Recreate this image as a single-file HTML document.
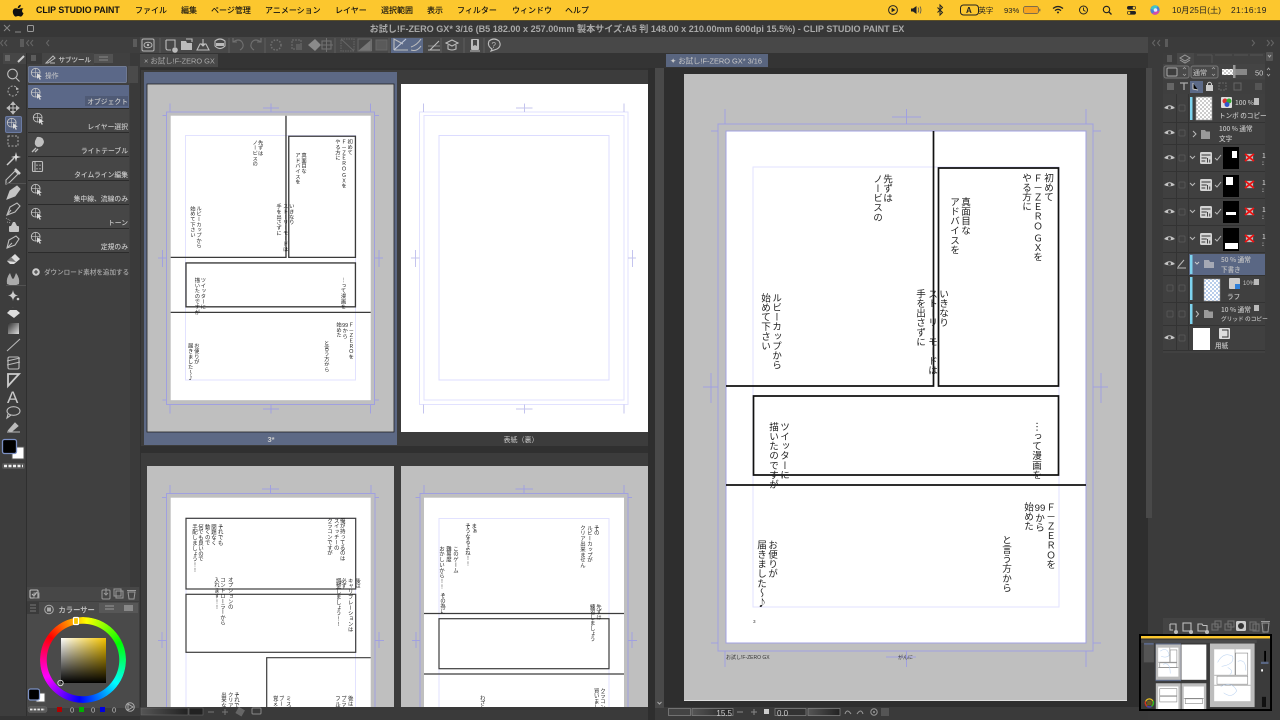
<!DOCTYPE html>
<html><head><meta charset="utf-8"><style>
html,body{margin:0;padding:0;background:#3a3a3a;overflow:hidden}
svg{display:block;position:absolute;left:0;top:0}
text{font-family:"Liberation Sans","Noto Sans CJK JP",sans-serif}
.m{font-size:8px;fill:#111;font-family:"Noto Sans CJK JP","Liberation Sans",sans-serif;font-weight:500}
.l{font-size:6.8px;fill:#c8c8c8;font-family:"Noto Sans CJK JP",sans-serif;font-weight:500}
.ly{font-size:6.6px;fill:#c4c4c4;font-family:"Noto Sans CJK JP",sans-serif;font-weight:500}
.v{writing-mode:vertical-rl;text-orientation:upright;font-family:"Noto Sans CJK JP",sans-serif;font-size:9.6px;fill:#222}
.s{font-size:5.4px}
.ic{fill:none;stroke:#bdbdbd;stroke-width:1.1}
.id{fill:none;stroke:#707070;stroke-width:1.1}
.mk{fill:none;stroke:#a0a0e0;stroke-width:1;vector-effect:non-scaling-stroke;shape-rendering:crispEdges}
.fr{fill:none;stroke:#e2e2ff;stroke-width:1;vector-effect:non-scaling-stroke;shape-rendering:crispEdges}
</style></head><body>
<svg width="1280" height="720" viewBox="0 0 1280 720" xmlns="http://www.w3.org/2000/svg">
<defs>
<linearGradient id="sq1" x1="0" x2="1" y1="0" y2="0"><stop offset="0" stop-color="#fff"/><stop offset="1" stop-color="#f4c400"/></linearGradient>
<linearGradient id="sq2" x1="0" x2="0" y1="0" y2="1"><stop offset="0" stop-color="#000" stop-opacity="0"/><stop offset="1" stop-color="#000"/></linearGradient>
<linearGradient id="gr" x1="0" x2="1" y1="0" y2="1"><stop offset="0" stop-color="#333"/><stop offset="1" stop-color="#ddd"/></linearGradient>
<linearGradient id="sl" x1="0" x2="1" y1="0" y2="0"><stop offset="0" stop-color="#555"/><stop offset="1" stop-color="#222"/></linearGradient>
<pattern id="ck" width="4" height="4" patternUnits="userSpaceOnUse"><rect width="4" height="4" fill="#fff"/><rect width="2" height="2" fill="#ccc"/><rect x="2" y="2" width="2" height="2" fill="#ccc"/></pattern>
<pattern id="ckb" width="4" height="4" patternUnits="userSpaceOnUse"><rect width="4" height="4" fill="#fff"/><rect width="2" height="2" fill="#b8cdea"/><rect x="2" y="2" width="2" height="2" fill="#b8cdea"/></pattern>
<symbol id="eye" viewBox="0 0 12 8" overflow="visible"><path d="M0 4Q6-2 12 4Q6 7 0 4Z" fill="#c4c4c4"/><circle cx="6" cy="3.6" r="1.6" fill="#444"/></symbol>
<symbol id="obj" viewBox="0 0 16 16" overflow="visible"><circle cx="6.5" cy="6.5" r="5" fill="none" stroke="#c4c4c4" stroke-width="1"/><path d="M1.5 6.5H11.5M6.5 1.5V11.5" stroke="#c4c4c4" stroke-width=".7"/><path d="M8 7L13.5 11L11 11.4L12.5 14L11 14.6L9.8 12L8 13.5Z" fill="#ddd"/></symbol>
<symbol id="mks" viewBox="0 0 10 10" overflow="visible"><rect x="1" y="1" width="8" height="8" fill="#bbb"/><path d="M0 1L10 9M10 1L0 9" stroke="#ee1111" stroke-width="2"/></symbol>
<symbol id="lt" viewBox="0 0 16 16" overflow="visible"><rect x="0" y="0" width="16" height="16" rx="2" fill="#d4d4d4"/><path d="M2 4H14M2 8H9M2 12H7M10 8V14M13 10V14" stroke="#333" stroke-width="1.2"/></symbol>
</defs>

<!-- base -->
<rect width="1280" height="720" fill="#3a3a3a"/>
<rect width="1280" height="20" fill="#fcc72e"/>
<rect y="20" width="1280" height="1" fill="#5a4d24"/>
<rect y="21" width="1280" height="16" fill="#373737"/>
<rect y="37" width="1280" height="16" fill="#3e3e3e"/>
<rect y="53" width="1280" height="15" fill="#343434"/>

<!-- menu bar -->
<path d="M21.6 8.2c-1.4 0-1.9.8-3 .8s-1.600-.8-2.900-.8c-1.600 0-2.900 1.400-2.900 3.600 0 2.300 1.600 4.800 2.900 4.800.9 0 1.400-.6 2.500-.6s1.500.6 2.500.6c1.300 0 2.400-2.200 2.800-3.400-1.800-.8-2-3.600-.1-4.400-.6-.5-1.100-.6-1.800-.6zM19.900 7.300c.7-.8 1-1.700.9-2.600-.9.100-1.800.6-2.300 1.300-.5.600-.8 1.500-.7 2.200.8.100 1.600-.3 2.100-.9z" fill="#111"/>
<text x="36" y="12.800" font-size="8.800" font-weight="700" fill="#111" style="font-family:'Liberation Sans',sans-serif">CLIP STUDIO PAINT</text>
<text class="m" x="135" y="12.800">ファイル</text><text class="m" x="181" y="12.800">編集</text><text class="m" x="211" y="12.800">ページ管理</text><text class="m" x="265" y="12.800">アニメーション</text><text class="m" x="335" y="12.800">レイヤー</text><text class="m" x="381" y="12.800">選択範囲</text><text class="m" x="427" y="12.800">表示</text><text class="m" x="457" y="12.800">フィルター</text><text class="m" x="512" y="12.800">ウィンドウ</text><text class="m" x="565" y="12.800">ヘルプ</text>
<!-- status icons -->
<circle cx="893" cy="10" r="4.400" fill="none" stroke="#222" stroke-width="1"/><path d="M891.600 7.800L895.500 10L891.600 12.200Z" fill="#222"/>
<path d="M911 8.500H913L916.500 6V14L913 11.500H911Z" fill="#222"/><path d="M918 7.500Q919.500 10 918 12.500M920 6.500Q922 10 920 13.500" fill="none" stroke="#555" stroke-width=".8"/>
<path d="M937.500 7.500L942.500 12.500L940 15V5L942.500 7.500L937.500 12.500" fill="none" stroke="#222" stroke-width="1"/>
<rect x="960.500" y="5" width="18" height="10" rx="3" fill="none" stroke="#222" stroke-width="1"/><text x="966" y="13" font-size="8" font-weight="700" fill="#222">A</text>
<text x="978.500" y="13" font-size="7.400" fill="#222" style="font-family:'Noto Sans CJK JP',sans-serif">英字</text>
<text x="1004" y="13" font-size="7.600" fill="#222">93%</text>
<rect x="1023.500" y="6.500" width="15" height="7" rx="2" fill="#f7a51f" stroke="#555" stroke-width=".7"/><rect x="1039.300" y="8.800" width="1" height="2.500" fill="#555"/>
<path d="M1053 8.500Q1058 4.500 1063 8.500M1055 10.600Q1058 8 1061 10.600" fill="none" stroke="#222" stroke-width="1.300"/><path d="M1056.800 12.300L1058 11.300L1059.200 12.300L1058 13.800Z" fill="#222"/>
<circle cx="1083.500" cy="10" r="4" fill="none" stroke="#222" stroke-width="1"/><path d="M1083.500 7.500V10.200L1085.500 11.400" fill="none" stroke="#222" stroke-width=".9"/>
<circle cx="1106.500" cy="9.500" r="3.200" fill="none" stroke="#222" stroke-width="1.100"/><path d="M1109 12L1111.500 14.500" stroke="#222" stroke-width="1.300"/>
<rect x="1127" y="6" width="9" height="3.600" rx="1.800" fill="#222"/><rect x="1127" y="11" width="9" height="3.600" rx="1.800" fill="#222"/><circle cx="1134" cy="7.800" r="1.300" fill="#fcc72e"/><circle cx="1129" cy="12.800" r="1.300" fill="#fcc72e"/>
<circle cx="1155" cy="10" r="4.700" fill="#4b7fd6"/><path d="M1150.500 9Q1153 4 1158 6L1155 10Z" fill="#3fc7c7"/><path d="M1152 13.600Q1155 11 1159.600 10.600Q1158 15 1154 14.800Z" fill="#d64ba8"/><circle cx="1155.500" cy="10" r="1.800" fill="#e8e8ff"/>
<text x="1172" y="13" font-size="8.200" fill="#222" style="font-family:'Liberation Sans','Noto Sans CJK JP',sans-serif" letter-spacing=".1">10月25日(土)</text>
<text x="1231" y="13" font-size="8.400" fill="#222" letter-spacing=".4">21:16:19</text>

<!-- title -->
<text x="637" y="32" text-anchor="middle" font-size="9.080" font-weight="700" fill="#a9a9a9" style="font-family:'Liberation Sans','Noto Sans CJK JP',sans-serif">お試し!F-ZERO GX* 3/16 (B5 182.00 x 257.00mm 製本サイズ:A5 判 148.00 x 210.00mm 600dpi 15.5%) - CLIP STUDIO PAINT EX</text>
<path d="M4 25L10 31M10 25L4 31" stroke="#888" stroke-width="1"/><path d="M15 32H21" stroke="#888" stroke-width="1"/><rect x="27.500" y="25.500" width="6" height="6" rx="1" fill="none" stroke="#999" stroke-width="1"/>

<!-- left collapse row -->
<path d="M3 40L0.500 43L3 46M7 40L4.500 43L7 46M29 40L26.500 43L29 46M33 40L30.500 43L33 46M49 40L46.500 43L49 46" fill="none" stroke="#666" stroke-width="1"/>
<rect x="20" y="39" width="4" height="8" fill="#5b5b5b"/><rect x="133" y="39" width="4" height="8" fill="#5b5b5b"/>

<!-- command bar -->
<rect x="140" y="37" width="1010" height="16" fill="#484848"/>
<rect x="391" y="38" width="32" height="15" fill="#5c6a88"/>
<rect x="142" y="39" width="12" height="12" rx="1.500" fill="none" stroke="#b8b8b8"/><ellipse cx="148" cy="45" rx="4" ry="2.800" fill="none" stroke="#b8b8b8"/><circle cx="148" cy="45" r="1.200" fill="#b8b8b8"/>
<path d="M160 38V53M229 38V53M265 38V53M335 38V53M389 38V53M441 38V53M464 38V53M484 38V53" stroke="#5e5e5e"/>
<path d="M166 40H175V47M166 40V48Q166 50 168 50H171" class="ic"/><circle cx="175" cy="50" r="2.800" fill="#bbb"/>
<path d="M181 41H186L187 43H192V50H181Z" fill="#bbb"/><path d="M186 39L192 39L192 42" class="ic"/>
<path d="M197 50L200 44H206L209 50Z" class="ic"/><path d="M203 39V46M200.500 43.500L203 46L205.500 43.500" class="ic"/>
<path d="M215 41Q220 37 225 41V46Q220 51 215 46Z" class="ic"/><rect x="216" y="43" width="8" height="3" fill="#bbb"/>
<path d="M237 42H233V38M233 42Q239 38 242 42Q245 47 240 50" class="id"/>
<path d="M257 42H261V38M261 42Q255 38 252 42Q249 47 254 50" class="id"/>
<circle cx="276" cy="45" r="5" fill="none" stroke="#707070" stroke-width="1.500" stroke-dasharray="1.500 1.500"/>
<rect x="292" y="40" width="9" height="9" fill="none" stroke="#707070" stroke-dasharray="2 1"/><rect x="296" y="44" width="6" height="6" fill="#5d5d5d"/>
<path d="M308 45L315 39L321 45L315 51Z" fill="#8a8a8a"/>
<rect x="322" y="41" width="9" height="8" class="id"/><path d="M326.500 38V52M320 45H333" stroke="#707070"/>
<rect x="341" y="39" width="13" height="12" fill="none" stroke="#666" stroke-dasharray="1.500 1"/><path d="M341 39L354 51" stroke="#666"/>
<path d="M358 51L372 39V51Z" fill="#777"/><rect x="358" y="39" width="13" height="12" fill="none" stroke="#666"/>
<rect x="376" y="40" width="11" height="10" fill="#5a5a5a" stroke="#666"/>
<path d="M394 50H408M394 50V39L403 44" class="ic"/><path d="M394 50L406 39" stroke="#c0c8da" stroke-width="1.100"/>
<path d="M411 50Q417 52 421 46M411 47Q417 45 421 39" class="ic"/>
<path d="M428 50H440M430 50L439 41" class="ic"/><path d="M428 46H440" class="ic" opacity=".5"/>
<path d="M446 43L452 40L458 43L452 46Z" class="ic"/><path d="M448 45V49Q452 51 456 49V45" class="ic"/>
<rect x="471" y="39" width="8" height="11" rx="1" fill="#bbb"/><path d="M473 40V46L475 45L477 46V40" fill="#484848"/><path d="M470 51H480" stroke="#bbb"/>
<path d="M489 41Q494 37 499 41Q502 46 497 49L491 51L492 49Q487 46 489 41Z" class="ic"/><text x="491.500" y="48" font-size="8" fill="#bbb">?</text>

<!-- tabs -->
<rect x="140" y="54" width="78" height="13" fill="#484848"/>
<text x="144" y="63.500" font-size="7.400" fill="#aaa" style="font-family:'Liberation Sans','Noto Sans CJK JP',sans-serif">×  お試し!F-ZERO GX</text>
<rect x="666" y="54" width="102" height="13" fill="#59657f"/>
<text x="670" y="63.500" font-size="7.400" fill="#c8c8c8" style="font-family:'Liberation Sans','Noto Sans CJK JP',sans-serif">✦ お試し!F-ZERO GX* 3/16</text>

<!-- LEFT canvas area -->
<rect x="140" y="68" width="510" height="652" fill="#303030"/>
<rect x="141" y="70" width="510" height="376" fill="#3c3c3c"/>
<rect x="141" y="453" width="510" height="267" fill="#3c3c3c"/>
<rect x="144" y="72" width="253" height="373" fill="#5d6985"/>
<rect x="147" y="84" width="247" height="348" fill="#bfbfbf" stroke="#222" stroke-width=".8"/>
<text x="271" y="442" text-anchor="middle" font-size="7.500" font-weight="700" fill="#ccc">3*</text>
<rect x="401" y="84" width="247" height="348" fill="#fff"/>
<text x="521" y="442" text-anchor="middle" font-size="7" fill="#ccc" style="font-family:'Noto Sans CJK JP',sans-serif">表紙（裏）</text>
<rect x="147" y="466" width="247" height="254" fill="#bfbfbf"/>
<rect x="401" y="466" width="247" height="254" fill="#bfbfbf"/>

<!-- P1 -->
<g transform="translate(170.700,115.700) scale(.5556)">
<rect width="360" height="512" fill="#fff"/>
<path class="fr" d="M27 36H333V476H27Z"/>
<path class="mk" d="M-8-7H367V520H-8ZM-1-22V-7M360-22V-7M-15 0H-8M367 0H375M-15 512H-8M367 512H375M-1 520V536M360 520V536M166-14H195M180.500-22V-7M166 528H195M180.500 520V536M-23 256H-8M-15 242V272M367 256H382M375 242V272"/>
<g fill="none" stroke="#3a3a3a" stroke-width="2.400">
<path d="M207.500 0V255H0"/><path d="M212.500 37H332.500V255H212.500Z"/><path d="M27.500 265H332.500V344H27.500Z"/><path d="M0 354H360"/>
</g>
<text class="v" x="323" y="42">初めて</text><text class="v" x="312" y="42">Ｆ－ＺＥＲＯ</text><text class="v" x="312" y="102">ＧＸを</text><text class="v" x="301" y="42">やる方に</text>
<text class="v" x="240" y="66">真面目な</text><text class="v" x="229" y="66">アドバイスを</text>
<text class="v" x="162" y="43">先ずは</text><text class="v" x="152" y="43">ノービスの</text>
<text class="v" x="218" y="158">いきなり</text><text class="v" x="207" y="158">ストーリーモードは</text><text class="v" x="195" y="158">手を出さずに</text>
<text class="v" x="51" y="162">ルビーカップから</text><text class="v" x="40" y="162">始めて下さい</text>
<text class="v" x="59" y="291">ツイッターに</text><text class="v" x="48" y="291">描いたのですが</text>
<text class="v" x="311" y="291">…って漫画を</text>
<text class="v" x="325" y="371">Ｆ－ＺＥＲＯを</text><text x="314" y="380" text-anchor="middle" font-size="9.600" fill="#222">99</text><text class="v" x="314" y="382">から</text><text class="v" x="303" y="371">始めた</text>
<text class="v" x="281" y="404">と言う方から</text>
<text class="v" x="47" y="409">お便りが</text><text class="v" x="36" y="409">届きました～♪</text>
</g>

<!-- P2 -->
<g transform="translate(424,115.700) scale(.5556)">
<path class="fr" d="M-8-7H367V520H-8ZM0 0H360V512H0Z"/>
<path class="fr" d="M27 36H333V476H27Z" style="stroke:#dcdcff"/>
<path class="mk" d="M-1-22V-7M360-22V-7M-1 520V536M360 520V536M166-14H195M180.500-22V-7M166 528H195M180.500 520V536M-23 256H-8M-15 242V272M367 256H382M375 242V272" style="stroke:#c4c4ee"/>
</g>

<!-- P3 -->
<g>
<rect x="170.700" y="497.700" width="200" height="222" fill="#fff"/>
<path class="mk" d="M166.700 720V493.700H375V720M170 485V493.700M371 485V493.700M262 489H279M270.700 485V493.700M162 497.700H166.700M375 497.700H379M158 640.500H166.700M162 632V648M375 640.500H384M379 632V648"/>
<path class="fr" d="M186 708V518.300H355.700V708"/>
<g fill="none" stroke="#3c3c3c" stroke-width="1.200"><rect x="186" y="518.300" width="169.700" height="70.700"/><rect x="186" y="594.300" width="169.700" height="58"/><path d="M266.700 708V657.700H370.700"/></g>
<text class="v s" x="342.700" y="518">俺が持ってるのは</text><text class="v s" x="336.700" y="518">スイッチーの</text><text class="v s" x="330" y="518">クラコンですが</text>
<text class="v s" x="220.700" y="524">それでも</text><text class="v s" x="214" y="524">問題なく</text><text class="v s" x="207.700" y="524">動くので</text><text class="v s" x="201" y="524">何でも良いので</text><text class="v s" x="195" y="524">手配しましょう!!</text>
<text class="v s" x="358" y="578">後は</text><text class="v s" x="350.700" y="578">キャリブレーションは</text><text class="v s" x="344" y="578">必ず</text><text class="v s" x="338.700" y="578">調整しましょう!!</text>
<text class="v s" x="230.700" y="577">オプションの</text><text class="v s" x="223" y="577">コントローラーから</text><text class="v s" x="217" y="577">入れます!!</text>
<text class="v s" x="237" y="692">それで</text><text class="v s" x="230.700" y="692">クリア</text><text class="v s" x="224" y="692">出来な</text>
<text class="v s" x="288.700" y="695.700">ミスず</text><text class="v s" x="281.700" y="695.700">ブース</text><text class="v s" x="275.700" y="695.700">覚えま</text>
<text class="v s" x="350.700" y="695.700">後は</text><text class="v s" x="344" y="695.700">プラク</text><text class="v s" x="338" y="695.700">フル活</text>
</g>

<!-- P4 -->
<g>
<rect x="424" y="497.700" width="200" height="222" fill="#fff"/>
<path class="mk" d="M420 720V493.700H628V720M424 485V493.700M624 485V493.700M515.500 489H533M524 485V493.700M415.500 497.700H420M628 497.700H632M412 640.500H420M416 632V648M628 640.500H637M632 632V648"/>
<path class="fr" d="M439 708V518.300H609V708"/>
<g fill="none" stroke="#3c3c3c" stroke-width="1.200"><path d="M424 613.500H624M424 674H624"/><rect x="439" y="618.700" width="170" height="50"/></g>
<text class="v s" x="596.700" y="525">その</text><text class="v s" x="590" y="525">ルビーカップが</text><text class="v s" x="583" y="525">クリア出来ません</text>
<text class="v s" x="474.300" y="523">まぁ</text><text class="v s" x="468" y="523">そうなるよね!!</text>
<text class="v s" x="456" y="546">このゲーム</text><text class="v s" x="449" y="546">難易度</text><text class="v s" x="442" y="546">おかしいから!!</text>
<text class="v s" x="443" y="592.700">その為に</text>
<text class="v s" x="599" y="604">先ずは</text><text class="v s" x="592.700" y="604">練習しましょう</text>
<text class="v s" x="603" y="688">クラコン</text><text class="v s" x="596.700" y="688">買いまし</text><text class="v s" x="482.700" y="695">わざわ</text>
</g>

<!-- left canvas bottom bar -->
<rect x="140" y="707" width="512" height="13" fill="#3a3a3a"/>
<rect x="141" y="708" width="47" height="7" fill="url(#sl)" stroke="#666" stroke-width=".6"/><rect x="189" y="708" width="14" height="7" fill="#222" stroke="#666" stroke-width=".6"/>
<path d="M208 712H214M222 712H228M225 709V715" stroke="#777"/><rect x="237" y="708" width="7" height="7" fill="#666" transform="rotate(30 240 711)"/><rect x="252" y="708" width="9" height="6" rx="1" fill="none" stroke="#888"/>

<!-- scroll gutter -->
<rect x="648" y="68" width="7" height="652" fill="#2e2e2e"/>
<rect x="655" y="68" width="9" height="640" fill="#494949"/>
<path d="M657.500 702L659.500 704L661.500 702" fill="none" stroke="#aaa"/>
<rect x="664" y="68" width="484" height="640" fill="#2e2e2e"/>

<!-- MAIN canvas -->
<rect x="684" y="74" width="443" height="627" fill="#bfbfbf"/><rect x="684" y="700" width="443" height="1" fill="#e0e0e0"/>
<rect x="726" y="131" width="360" height="512" fill="#fff"/>
<g transform="translate(726,131)">
<path class="fr" d="M27 36H333V476H27Z"/>
<path class="mk" d="M-8-7H367V520H-8ZM-1-22V-7M360-22V-7M-15 0H-8M367 0H375M-15 512H-8M367 512H375M-1 520V536M360 520V536M166-14H195M180.500-22V-7M160 526H190M180.500 520V536M-23 256H-8M-15 242V272M367 256H382M375 242V272M0 0H360V512H0Z"/>
<g fill="none" stroke="#111" stroke-width="1.700">
<path d="M207.500 0V255H0"/><path d="M212.500 37H332.500V255H212.500Z"/><path d="M27.500 265H332.500V344H27.500Z"/><path d="M0 354H360"/>
</g>
<text class="v" x="323" y="42">初めて</text><text class="v" x="312" y="42">Ｆ－ＺＥＲＯ</text><text class="v" x="312" y="102">ＧＸを</text><text class="v" x="301" y="42">やる方に</text>
<text class="v" x="240" y="66">真面目な</text><text class="v" x="229" y="66">アドバイスを</text>
<text class="v" x="162" y="43">先ずは</text><text class="v" x="152" y="43">ノービスの</text>
<text class="v" x="218" y="158">いきなり</text><text class="v" x="207" y="158">ストーリーモードは</text><text class="v" x="195" y="158">手を出さずに</text>
<text class="v" x="51" y="162">ルビーカップから</text><text class="v" x="40" y="162">始めて下さい</text>
<text class="v" x="59" y="291">ツイッターに</text><text class="v" x="48" y="291">描いたのですが</text>
<text class="v" x="311" y="291">…って漫画を</text>
<text class="v" x="325" y="371">Ｆ－ＺＥＲＯを</text><text x="314" y="380" text-anchor="middle" font-size="9.600" fill="#222">99</text><text class="v" x="314" y="382">から</text><text class="v" x="303" y="371">始めた</text>
<text class="v" x="281" y="404">と言う方から</text>
<text class="v" x="47" y="409">お便りが</text><text class="v" x="36" y="409">届きました～♪</text>
<text x="27" y="492" font-size="4.600" fill="#333">3</text>
<text x="0" y="528" font-size="5" fill="#333" style="font-family:'Liberation Sans','Noto Sans CJK JP',sans-serif">お試し!F-ZERO GX</text>
<text x="172" y="528" font-size="5" fill="#333" style="font-family:'Noto Sans CJK JP',sans-serif">がんに</text>
</g>

<!-- main canvas status -->
<rect x="664" y="707" width="486" height="13" fill="#3a3a3a"/>
<rect x="668.500" y="708.500" width="22" height="7" fill="#444" stroke="#888" stroke-width=".7"/><rect x="692" y="708.500" width="41" height="7" fill="url(#sl)" stroke="#888" stroke-width=".7"/>
<text x="732" y="716" text-anchor="end" font-size="8" fill="#ccc">15.5</text>
<path d="M737 712H743M751 712H757M754 709V715" stroke="#888"/><rect x="764" y="709" width="5" height="5" fill="#ccc"/>
<rect x="775" y="708.500" width="31" height="7" fill="#333" stroke="#888" stroke-width=".7"/><text x="777" y="716" font-size="8" fill="#ccc">0.0</text>
<rect x="808" y="708.500" width="32" height="7" fill="url(#sl)" stroke="#888" stroke-width=".7"/>
<path d="M845 714Q847 708 851 714M857 714Q861 708 863 714" fill="none" stroke="#999"/><circle cx="874" cy="712" r="3.200" fill="none" stroke="#999"/><circle cx="874" cy="712" r="1" fill="#999"/><rect x="881" y="708" width="8" height="8" fill="#555"/>

<!-- left tool column -->
<rect x="0" y="53" width="140" height="667" fill="#3d3d3d"/>
<rect x="26" y="53" width="1" height="667" fill="#2f2f2f"/>
<rect x="3" y="53" width="23" height="11" fill="#464646"/><rect x="5" y="55" width="5" height="6" fill="#666"/><path d="M18 62L24 56" stroke="#ccc" stroke-width="2"/>
<circle cx="12.500" cy="74" r="4.800" class="ic"/><path d="M16 78L19.500 81.500" class="ic" stroke-width="1.500"/>
<circle cx="13" cy="91" r="5" fill="none" stroke="#aaa" stroke-dasharray="2 1.500"/><path d="M16 87L19 89L16 90" fill="#bbb"/>
<path d="M13 102V114M7 108H19M13 102L11 104.500H15ZM13 114L11 111.500H15ZM7 108L9.500 106V110ZM19 108L16.500 106V110Z" fill="#bbb" stroke="#bbb" stroke-width="1"/>
<rect x="5.500" y="116.500" width="16" height="16" rx="1.500" fill="#55617f" stroke="#6b7ba3"/><use href="#obj" x="6" y="117" width="14" height="14"/>
<rect x="8" y="136" width="10" height="10" fill="none" stroke="#aaa" stroke-dasharray="2 1.500"/>
<path d="M7 165L14 158" stroke="#ccc" stroke-width="1.500"/><path d="M16 152L17 156L21 157L17 158L16 162L15 158L11 157L15 156Z" fill="#ddd"/>
<path d="M6 180L15 171L18 174L9 183L6 184Z" class="ic"/><path d="M15 169L20 174" stroke="#ccc" stroke-width="2.500"/>
<rect x="6" y="183" width="20" height=".8" fill="#585858"/>
<path d="M7 199L10 191L17 186L20 189L15 196ZM7 199L12 194" fill="#c4c4c4" stroke="#c4c4c4"/>
<path d="M7 215L10 207L17 203L20 206L15 212Z" class="ic"/><path d="M7 215L11 210" class="ic"/>
<rect x="9" y="226" width="10" height="6" rx="1" fill="#c4c4c4"/><path d="M11 226L13 222H15L17 226" fill="#c4c4c4"/><path d="M6 218L11 221M7 222L11 223" stroke="#999" stroke-dasharray="1 1"/>
<path d="M7 248L9 240L16 236L19 239L15 245Z" class="ic"/><path d="M7 248L12 243" class="ic"/>
<path d="M7 261L15 254L20 259L14 264H10Z" fill="#ddd"/><path d="M7 261L11 257L16 262" fill="#777"/>
<path d="M7 284Q6 278 10 273Q12 279 13 279Q14 279 16 273Q20 278 19 284Q13 287 7 284Z" fill="#aaa"/>
<rect x="6" y="285" width="20" height=".8" fill="#585858"/>
<path d="M13 290Q13.500 295 18 295.500Q13.500 296 13 301Q12.500 296 8 295.500Q12.500 295 13 290Z" fill="#ccc"/><circle cx="18" cy="299" r="1.300" fill="#ccc"/>
<path d="M13 307L20 313L14 318L7 313Z" fill="#ddd"/><path d="M9 310L13 307L18 310Z" fill="#3d3d3d"/>
<rect x="8" y="323" width="11" height="11" fill="url(#gr)"/>
<path d="M7 351L20 339" stroke="#bbb"/>
<rect x="8" y="357" width="11" height="12" rx="1.500" class="ic"/><path d="M7 361L20 358M7 365L20 362" stroke="#bbb"/>
<path d="M8 374H19L8 386Z" fill="none" stroke="#ccc" stroke-width="1.800"/>
<text x="7" y="403" font-size="17" fill="#c8c8c8">A</text>
<ellipse cx="13.500" cy="411" rx="6.500" ry="4.300" class="ic"/><path d="M8 414L7 418L11 415" class="ic"/>
<path d="M7 432H20M8 431L15 423L18 426L11 432" fill="#bbb" stroke="#bbb"/>
<rect x="12" y="447" width="12" height="12" fill="#fff" stroke="#555"/>
<rect x="2.500" y="439.500" width="14" height="14" rx="2" fill="#000" stroke="#7b90c4" stroke-width="1.300"/>
<rect x="2" y="463" width="23" height="6" rx="2" fill="#555"/><path d="M4 466H23" stroke="#eee" stroke-width="2.400" stroke-dasharray="3 1.500"/>

<!-- subtool panel -->
<rect x="27" y="53" width="103" height="534" fill="#404040"/>
<rect x="130" y="53" width="10" height="534" fill="#3a3a3a"/>
<rect x="27" y="53" width="15" height="11" fill="#3a3a3a"/><rect x="31" y="55" width="5" height="6" fill="#5c5c5c"/>
<rect x="42" y="53" width="52" height="12" fill="#454545"/>
<path d="M46 63L53 56L55 58L48 63ZM50 63H55" fill="none" stroke="#bbb"/>
<text x="58.500" y="62" font-size="6.500" font-weight="700" fill="#b8b8b8" style="font-family:'Noto Sans CJK JP',sans-serif">サブツール</text>
<rect x="94" y="54" width="19" height="9" fill="#525252"/><path d="M99 57H108M99 60H108" stroke="#888"/>
<rect x="28.500" y="66.500" width="98" height="16" rx="1" fill="#5b6888" stroke="#7d89a5" stroke-width=".7"/>
<rect x="128" y="66" width="10" height="17" fill="#4a4a4a"/>
<use href="#obj" x="30" y="67" width="14" height="14"/><text x="45" y="78" font-size="6.800" fill="#ccc" style="font-family:'Noto Sans CJK JP',sans-serif">操作</text>
<rect x="28" y="85" width="101" height="23" fill="#5b6888"/>
<use href="#obj" x="30" y="87" width="14" height="14"/>
<rect x="85" y="96" width="43" height="10" fill="#4f5a75"/>
<text class="l" x="128" y="104" text-anchor="end">オブジェクト</text>
<g fill="#464646"><rect x="28" y="109" width="101" height="23"/><rect x="28" y="133" width="101" height="23"/><rect x="28" y="157" width="101" height="23"/><rect x="28" y="181" width="101" height="23"/><rect x="28" y="205" width="101" height="23"/><rect x="28" y="229" width="101" height="23"/></g>
<path d="M28 108.500H129M28 132.500H129M28 156.500H129M28 180.500H129M28 204.500H129M28 228.500H129M28 252.500H129" stroke="#2b2b2b"/>
<use href="#obj" x="32" y="112" width="14" height="14"/><text class="l" x="128" y="129" text-anchor="end">レイヤー選択</text>
<path d="M37 137Q43 136 44 142Q43 147 38 147Q34 146 35 141Z" fill="#c0c0c0"/><path d="M36 148L32 152M38 149L35 152" stroke="#c0c0c0" stroke-width="1.300"/><text class="l" x="128" y="153" text-anchor="end">ライトテーブル</text>
<rect x="32.500" y="161.500" width="10" height="10" rx="1" class="ic"/><path d="M35 162V171M37 164.500V166M40 164.500V166M37 168V169.500M40 168V169.500" stroke="#bdbdbd"/><text class="l" x="128" y="177" text-anchor="end">タイムライン編集</text>
<use href="#obj" x="30" y="183" width="14" height="14"/><text class="l" x="128" y="201" text-anchor="end">集中線、流線のみ</text>
<use href="#obj" x="30" y="207" width="14" height="14"/><text class="l" x="128" y="225" text-anchor="end">トーン</text>
<use href="#obj" x="30" y="231" width="14" height="14"/><text class="l" x="128" y="249" text-anchor="end">定規のみ</text>
<circle cx="36" cy="272" r="3.800" fill="#ccc"/><path d="M34 272H38M36 270V274" stroke="#3d3d3d" stroke-width="1.100"/>
<text x="44" y="274.500" font-size="6.560" fill="#aaa" style="font-family:'Noto Sans CJK JP',sans-serif;font-weight:500">ダウンロード素材を追加する</text>

<!-- subtool bottom icons -->
<rect x="27" y="587" width="112" height="14" fill="#474747"/>
<rect x="30" y="590" width="8" height="8" rx="1" class="ic"/><path d="M32 594L34 596L37 592" class="ic"/><rect x="34" y="593" width="5" height="5" fill="none" stroke="#999"/>
<rect x="102" y="590" width="8" height="9" rx="1" fill="none" stroke="#999"/><path d="M106 588V595M104 593L106 595L108 593" stroke="#999" fill="none"/>
<rect x="114" y="589" width="7" height="7" fill="none" stroke="#999"/><rect x="116" y="591" width="7" height="7" fill="none" stroke="#999"/>
<path d="M128 592H135L134 599H129ZM127 590.500H136" fill="none" stroke="#999"/>

<!-- color panel -->
<rect x="27" y="602" width="112" height="106" fill="#4a4a4a"/>
<rect x="27" y="602" width="12" height="12" fill="#3b3b3b"/><path d="M30 605H36M30 608H36M30 611H36" stroke="#777"/>
<circle cx="49" cy="609.500" r="4.300" fill="none" stroke="#aaa"/><rect x="47" y="607.500" width="4" height="4" fill="#aaa"/>
<text x="58.500" y="612.500" font-size="7.300" font-weight="700" fill="#bbb" style="font-family:'Noto Sans CJK JP',sans-serif">カラーサー</text>
<rect x="99" y="603" width="20" height="10" fill="#575757"/><path d="M105 606H114M105 609H114" stroke="#999"/><rect x="119" y="603" width="19" height="10" fill="#575757"/><rect x="124" y="605" width="9" height="6" fill="#888"/>
<foreignObject x="40" y="617" width="86" height="86"><div xmlns="http://www.w3.org/1999/xhtml" style="width:86px;height:86px;border-radius:50%;background:conic-gradient(from 305deg,#f00,#ff0,#0f0,#0ff,#00f,#f0f,#f00);-webkit-mask:radial-gradient(circle,transparent 36px,#000 36.500px,#000 43px,transparent 43.500px);mask:radial-gradient(circle,transparent 36px,#000 36.500px,#000 43px,transparent 43.500px)"></div></foreignObject>
<rect x="61" y="638" width="45" height="45" fill="url(#sq1)"/><rect x="61" y="638" width="45" height="45" fill="url(#sq2)"/>
<rect x="73.500" y="617.500" width="5" height="7" rx="1" fill="#f6c400" stroke="#fff" stroke-width="1.200"/>
<circle cx="60.500" cy="683" r="2.700" fill="none" stroke="#ddd" stroke-width=".9"/>
<rect x="36" y="693" width="9" height="9" fill="#fff" stroke="#555"/>
<rect x="28.500" y="689" width="11" height="11" rx="2" fill="#000" stroke="#7b90c4" stroke-width="1.200"/>
<rect x="28" y="706.500" width="19" height="6" rx="2.500" fill="#5a5a5a" stroke="#666" stroke-width=".6"/><path d="M30 709.500H45" stroke="#e8e8e8" stroke-width="1.800" stroke-dasharray="2.500 1.200"/>
<rect x="57" y="707" width="5" height="5" fill="#b00000"/><text x="70" y="712.500" font-size="7.500" fill="#bbb">0</text>
<rect x="79" y="707" width="5" height="5" fill="#00b000"/><text x="91" y="712.500" font-size="7.500" fill="#bbb">0</text>
<rect x="100" y="707" width="5" height="5" fill="#0000e0"/><text x="112" y="712.500" font-size="7.500" fill="#bbb">0</text>
<circle cx="130" cy="707" r="4.300" fill="none" stroke="#aaa"/><path d="M128 704V710L133 707Z" fill="none" stroke="#aaa"/>
<rect x="0" y="716" width="140" height="4" fill="#333"/>

<!-- right panels -->
<rect x="1148" y="37" width="132" height="683" fill="#3b3b3b"/>
<rect x="1146" y="68" width="6" height="450" fill="#494949"/>
<path d="M1160 40L1157.500 43L1160 46M1155 40L1152.500 43L1155 46" fill="none" stroke="#666"/><rect x="1165" y="39" width="3" height="8" fill="#5b5b5b"/>
<path d="M1252 40L1254.500 43L1252 46M1267 40L1269.500 43L1267 46M1271 40L1273.500 43L1271 46" fill="none" stroke="#666"/>
<rect x="1163" y="53" width="102" height="300" fill="#414141"/>
<rect x="1163" y="53" width="14" height="11" fill="#3c3c3c"/><rect x="1167" y="55" width="5" height="7" fill="#5a5a5a"/>
<rect x="1177" y="53" width="17" height="12" fill="#484848"/>
<path d="M1185 55L1190 58L1185 61L1180 58ZM1180 60L1185 63L1190 60" fill="none" stroke="#999"/>
<path d="M1197 55H1212M1212 55V63" stroke="#555"/><path d="M1215 55H1232M1234 55H1248M1250 55H1263" stroke="#555"/>
<rect x="1266" y="52" width="7" height="9" rx="1" fill="#555"/><path d="M1268 55L1269.500 57L1271 55" stroke="#aaa" fill="none"/>
<rect x="1163" y="64" width="102" height="15" fill="#444"/>
<rect x="1164" y="66" width="25" height="12" rx="2" fill="#4a4a4a" stroke="#777"/><rect x="1167" y="68" width="10" height="8" rx="1" fill="#3e3e3e" stroke="#aaa"/><path d="M1183 69L1184.500 67.500L1186 69M1183 74L1184.500 75.500L1186 74" fill="none" stroke="#aaa" stroke-width=".7"/>
<rect x="1191" y="66" width="27" height="12" rx="2" fill="#4a4a4a" stroke="#777"/><text x="1193" y="75" font-size="7" fill="#ccc" style="font-family:'Noto Sans CJK JP',sans-serif">通常</text><path d="M1212 69L1213.500 67.500L1215 69M1212 74L1213.500 75.500L1215 74" fill="none" stroke="#aaa" stroke-width=".7"/>
<rect x="1222" y="69" width="11" height="6" fill="url(#ck)"/><rect x="1233" y="69" width="14" height="6" fill="#888"/><rect x="1233" y="65" width="2.500" height="13" fill="#999"/>
<text x="1255" y="75.500" font-size="7.500" fill="#ccc">50</text><path d="M1267 70L1268.500 68L1270 70M1267 74L1268.500 76L1270 74" fill="none" stroke="#aaa" stroke-width=".7"/>
<rect x="1163" y="80" width="102" height="14" fill="#3f3f3f"/>
<rect x="1167" y="83" width="7" height="7" fill="#666"/><path d="M1180 83H1188M1184 83V90" stroke="#aaa" stroke-width="1.300"/>
<rect x="1190" y="81" width="13" height="12" fill="#5c6a88"/><path d="M1193 83V89L1198 90" stroke="#ccc"/><rect x="1206" y="85" width="7" height="6" fill="#ccc"/><path d="M1207.500 85V83.500Q1209.500 81 1211.500 83.500V85" fill="none" stroke="#ccc"/>
<rect x="1219" y="83" width="7" height="7" fill="none" stroke="#666" stroke-dasharray="2 1"/><rect x="1234" y="83" width="7" height="7" fill="none" stroke="#666"/><rect x="1255" y="83" width="7" height="7" fill="#555"/>
<rect x="1163" y="94" width="102" height="256" fill="#404040"/>
<path d="M1163 122.500H1265M1163 144.500H1265M1163 171.500H1265M1163 198.500H1265M1163 225.500H1265M1163 252.500H1265M1163 275.500H1265M1163 302.500H1265M1163 325.500H1265M1163 350.500H1265M1176.500 94V350M1188.500 94V350" stroke="#333"/>

<!-- layer rows -->
<use href="#eye" x="1164" y="104" width="11" height="8"/><rect x="1179" y="105" width="6" height="6" rx="1" fill="none" stroke="#555"/>
<rect x="1190" y="97" width="2.500" height="23" fill="#7dd3ee"/><rect x="1196" y="97" width="16" height="23" fill="url(#ck)" stroke="#999" stroke-width=".6"/>
<rect x="1221" y="97" width="11" height="11" rx="1" fill="#ddd"/><circle cx="1225" cy="101" r="2.500" fill="#d33"/><circle cx="1229" cy="101" r="2.500" fill="#3a3"/><circle cx="1227" cy="104.500" r="2.500" fill="#35c"/>
<text class="ly" x="1235" y="105">100 %</text><rect x="1254" y="98" width="5" height="7" fill="#ddd" opacity=".8"/>
<text class="ly" x="1219" y="118">トンボ のコピー</text>

<use href="#eye" x="1164" y="129" width="11" height="8"/><rect x="1179" y="130" width="6" height="6" rx="1" fill="none" stroke="#555"/>
<path d="M1193 131L1196 134L1193 137" fill="none" stroke="#bbb"/><path d="M1201 130H1205L1206 131.500H1210V139H1201Z" fill="#9a9a9a"/>
<text class="ly" x="1219" y="131">100 % 通常</text><text class="ly" x="1219" y="141">文字</text>

<use href="#eye" x="1164" y="154" width="11" height="8"/><rect x="1179" y="155" width="6" height="6" rx="1" fill="none" stroke="#555"/><path d="M1190 156L1192.500 158.500L1195 156" fill="none" stroke="#bbb"/><use href="#lt" x="1200" y="152" width="12" height="12"/><path d="M1215 158L1217 160L1221 155" fill="none" stroke="#bbb"/>
<rect x="1223" y="147" width="16" height="22" fill="#000"/><rect x="1232" y="151" width="5" height="7" fill="#fff"/><use href="#mks" x="1245" y="153" width="9" height="9"/>
<use href="#eye" x="1164" y="181" width="11" height="8"/><rect x="1179" y="182" width="6" height="6" rx="1" fill="none" stroke="#555"/><path d="M1190 183L1192.500 185.500L1195 183" fill="none" stroke="#bbb"/><use href="#lt" x="1200" y="179" width="12" height="12"/><path d="M1215 185L1217 187L1221 182" fill="none" stroke="#bbb"/>
<rect x="1223" y="175" width="16" height="22" fill="#000"/><rect x="1226" y="177" width="7" height="8" fill="#fff"/><use href="#mks" x="1245" y="180" width="9" height="9"/>
<use href="#eye" x="1164" y="208" width="11" height="8"/><rect x="1179" y="209" width="6" height="6" rx="1" fill="none" stroke="#555"/><path d="M1190 210L1192.500 212.500L1195 210" fill="none" stroke="#bbb"/><use href="#lt" x="1200" y="206" width="12" height="12"/><path d="M1215 212L1217 214L1221 209" fill="none" stroke="#bbb"/>
<rect x="1223" y="201" width="16" height="22" fill="#000"/><rect x="1226" y="212" width="10" height="3" fill="#fff"/><use href="#mks" x="1245" y="207" width="9" height="9"/>
<use href="#eye" x="1164" y="235" width="11" height="8"/><rect x="1179" y="236" width="6" height="6" rx="1" fill="none" stroke="#555"/><path d="M1190 237L1192.500 239.500L1195 237" fill="none" stroke="#bbb"/><use href="#lt" x="1200" y="233" width="12" height="12"/><path d="M1215 239L1217 241L1221 236" fill="none" stroke="#bbb"/>
<rect x="1223" y="228" width="16" height="23" fill="#000"/><rect x="1225" y="243" width="13" height="6" fill="#fff"/><use href="#mks" x="1245" y="234" width="9" height="9"/>
<text class="ly" x="1262" y="158">1</text><text class="ly" x="1262" y="165">:</text>
<text class="ly" x="1262" y="185">1</text><text class="ly" x="1262" y="192">:</text><text class="ly" x="1262" y="212">1</text><text class="ly" x="1262" y="219">:</text><text class="ly" x="1262" y="239">1</text><text class="ly" x="1262" y="246">:</text>

<rect x="1189" y="254" width="76" height="21" fill="#5a6784"/>
<use href="#eye" x="1164" y="260" width="11" height="8"/><path d="M1177 268H1186M1178 267L1184 260" stroke="#bbb" fill="none"/>
<rect x="1190" y="255" width="2.500" height="19" fill="#7dd3ee"/><path d="M1195 262L1197 264L1199 262" fill="none" stroke="#ccc"/>
<path d="M1204 260H1209L1210 262H1214V268H1204Z" fill="#a5a9b5"/>
<text class="ly" x="1221" y="262">50 % 通常</text><text class="ly" x="1221" y="272">下書き</text>

<rect x="1167" y="285" width="6" height="6" rx="1" fill="none" stroke="#555"/><rect x="1179" y="285" width="6" height="6" rx="1" fill="none" stroke="#555"/>
<rect x="1190" y="277" width="2.500" height="23" fill="#7dd3ee"/><rect x="1204" y="279" width="16" height="22" fill="url(#ckb)" stroke="#999" stroke-width=".5"/>
<rect x="1229" y="278" width="11" height="11" rx="1" fill="#ccc"/><rect x="1235" y="284" width="5" height="5" fill="#2f7fd8"/>
<text x="1243" y="285" font-size="6" fill="#c4c4c4">10%</text><rect x="1254" y="279" width="5" height="6" fill="#bbb"/><text class="ly" x="1227" y="299">ラフ</text>

<rect x="1167" y="311" width="6" height="6" rx="1" fill="none" stroke="#555"/><rect x="1179" y="311" width="6" height="6" rx="1" fill="none" stroke="#555"/>
<rect x="1190" y="304" width="2.500" height="20" fill="#7dd3ee"/><path d="M1196 311L1198.500 314L1196 317" fill="none" stroke="#bbb"/><path d="M1204 310H1208L1209 311.500H1213V318H1204Z" fill="#9a9a9a"/>
<text class="ly" x="1221" y="312">10 % 通常</text><text x="1221" y="321" font-size="5.700" fill="#c4c4c4" style="font-family:'Noto Sans CJK JP',sans-serif;font-weight:500">グリッド のコピー</text>
<rect x="1254" y="305" width="5" height="6" fill="#bbb"/>

<use href="#eye" x="1164" y="334" width="11" height="8"/><rect x="1179" y="335" width="6" height="6" rx="1" fill="none" stroke="#555"/>
<rect x="1193" y="328" width="17" height="22" fill="#fff"/><rect x="1219" y="328" width="11" height="11" rx="1" fill="#ddd"/><path d="M1222 330H1228V337H1222" fill="none" stroke="#333"/>
<text class="ly" x="1215" y="348">用紙</text>

<!-- layer bottom icons -->
<rect x="1163" y="618" width="102" height="17" fill="#444"/>
<path d="M1170 624H1176V630M1170 624V630H1173" class="ic"/><circle cx="1176" cy="632" r="2" fill="#bbb"/>
<rect x="1183" y="623" width="8" height="8" class="ic"/><circle cx="1191" cy="632" r="2" fill="#bbb"/>
<path d="M1198 624H1202L1203 625.500H1207V631H1198Z" class="ic"/><circle cx="1207" cy="632" r="2" fill="#bbb"/>
<rect x="1212" y="624" width="6" height="6" class="id"/><rect x="1215" y="621" width="6" height="6" class="id"/><rect x="1225" y="624" width="6" height="6" class="id"/><rect x="1228" y="621" width="6" height="6" class="id"/>
<rect x="1236" y="621" width="10" height="10" rx="1.500" fill="#ccc"/><circle cx="1241" cy="626" r="3" fill="#333"/>
<rect x="1250" y="622" width="6" height="8" class="id"/><rect x="1253" y="624" width="6" height="7" class="id"/>
<path d="M1262 623H1269L1268 632H1263ZM1261 621.500H1270" fill="none" stroke="#999"/>

<!-- navigator -->
<rect x="1139" y="634" width="133" height="77" fill="#000"/>
<g transform="translate(1141,636) scale(.1008,.1014)">
<rect width="1280" height="720" fill="#3a3a3a"/><rect width="1280" height="24" fill="#fcc72e"/>
<rect x="0" y="40" width="1280" height="28" fill="#4a4a4a"/>
<rect x="28" y="70" width="100" height="190" fill="#555"/><rect x="30" y="68" width="95" height="18" fill="#5b6888"/>
<rect x="144" y="72" width="253" height="373" fill="#5d6985"/><rect x="147" y="84" width="247" height="348" fill="#bdbdbd"/><rect x="170" y="115" width="201" height="286" fill="#fff"/><rect x="401" y="84" width="247" height="348" fill="#fff"/>
<rect x="147" y="466" width="247" height="254" fill="#bdbdbd"/><rect x="170" y="498" width="201" height="222" fill="#fff"/><rect x="401" y="466" width="247" height="254" fill="#bdbdbd"/><rect x="424" y="498" width="200" height="222" fill="#fff"/>
<rect x="684" y="74" width="443" height="627" fill="#bdbdbd"/><rect x="726" y="131" width="361" height="512" fill="#fff"/>
<g fill="none" stroke="#8a8a8a" stroke-width="6"><path d="M933 131V386H726M938 168H1059V386H938ZM754 396H1059V475H754ZM726 485H1087"/><path d="M286 115V258H170M289 137H356V258H289ZM186 265H356V310H186ZM170 312H371M186 520H356V590H186ZM186 595H356V650H186ZM424 614H624M439 620H609V668H439Z"/></g>
<g fill="none" stroke="#b6d0f0" stroke-width="5"><path d="M760 260Q820 150 910 200Q930 280 800 300M960 250Q1040 220 1040 340M790 500Q900 440 950 540Q900 620 820 560M860 310Q930 350 880 380M190 150Q260 100 280 190Q250 220 200 200M220 280Q290 250 290 370"/></g>
<rect x="1148" y="40" width="132" height="680" fill="#3b3b3b"/><rect x="1190" y="254" width="75" height="22" fill="#5a6784"/><rect x="1222" y="147" width="18" height="105" fill="#000"/><rect x="1192" y="328" width="18" height="22" fill="#fff"/>
<rect x="1200" y="600" width="40" height="100" fill="#111"/>
<circle cx="83" cy="660" r="40" fill="none" stroke="#e8c020" stroke-width="12"/><path d="M45 645A40 40 0 0 0 60 693" fill="none" stroke="#d02020" stroke-width="12"/><path d="M60 693A40 40 0 0 0 105 693" fill="none" stroke="#3030d0" stroke-width="12"/><path d="M105 693A40 40 0 0 0 120 640" fill="none" stroke="#20c020" stroke-width="12"/><rect x="61" y="638" width="45" height="45" fill="#6a5a20"/>
</g>
</svg>
</body></html>
